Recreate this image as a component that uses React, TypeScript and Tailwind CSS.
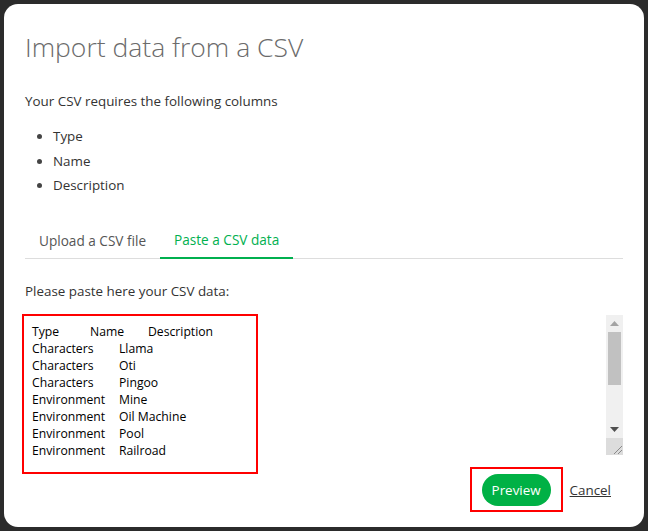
import { useState } from "react";

const csvText = [
  "Type\t\tName\tDescription",
  "Characters\tLlama",
  "Characters\tOti",
  "Characters\tPingoo",
  "Environment\tMine",
  "Environment\tOil Machine",
  "Environment\tPool",
  "Environment\tRailroad",
].join("\n");

const columns = ["Type", "Name", "Description"];

export default function App() {
  const [tab, setTab] = useState("paste");

  return (
    <div className="h-[531px] w-[648px] bg-[#2b2b2b] p-1 font-['Open_Sans',sans-serif]">
      <div className="relative flex h-[523px] w-[640px] flex-col rounded-[14px] bg-white px-[21px]">
        <h1 className="mt-[25px] text-[26.5px] font-light leading-[36px] text-[#6b6b6b]">
          Import data from a CSV
        </h1>

        <p className="mt-[26px] text-[13.4px] leading-[20px] text-[#333]">
          Your CSV requires the following columns
        </p>

        <ul className="mt-[15px] flex flex-col gap-[4.5px] pl-[28px] text-[13.4px] leading-[20px] text-[#333]">
          {columns.map((c) => (
            <li key={c} className="list-disc marker:text-[#444]">
              {c}
            </li>
          ))}
        </ul>

        <div className="mt-[34px] flex border-b border-[#dddddd]">
          <button
            onClick={() => setTab("upload")}
            className={`px-[14px] pb-[6px] text-[13.6px] leading-[22px] ${
              tab === "upload"
                ? "-mb-px border-b-2 border-[#00b04f] text-[#00b04f]"
                : "text-[#555]"
            }`}
          >
            Upload a CSV file
          </button>
          <button
            onClick={() => setTab("paste")}
            className={`px-[14px] pb-[6px] text-[13.6px] leading-[22px] ${
              tab === "paste"
                ? "-mb-px border-b-2 border-[#00b04f] text-[#00b04f]"
                : "text-[#555]"
            }`}
          >
            Paste a CSV data
          </button>
        </div>

        <p className="mt-[22px] text-[13.4px] leading-[20px] text-[#333]">
          Please paste here your CSV data:
        </p>

        <div className="mt-[14px] flex h-[140px]">
          <textarea
            readOnly
            value={csvText}
            className="h-full flex-1 resize-none overflow-hidden px-[7px] py-[8px] text-[12.2px] leading-[17px] text-black outline-none [tab-size:29px] font-['Open_Sans',sans-serif]"
          />
          <div className="flex w-[17px] flex-col bg-[#f0f0f0]">
            <div className="flex h-[17px] items-center justify-center">
              <svg width="9" height="5" viewBox="0 0 9 5">
                <path d="M4.5 0L9 5H0z" fill="#a3a3a3" />
              </svg>
            </div>
            <div className="mx-[2px] h-[53px] bg-[#c1c1c1]" />
            <div className="flex-1" />
            <div className="flex h-[17px] items-center justify-center">
              <svg width="9" height="5" viewBox="0 0 9 5">
                <path d="M0 0H9L4.5 5z" fill="#505050" />
              </svg>
            </div>
            <div className="flex h-[17px] items-end justify-end bg-[#dcdcdc]">
              <svg width="12" height="12" viewBox="0 0 12 12">
                <path d="M11 3L3 11M11 7L7 11" stroke="#8a8a8a" strokeWidth="1" />
              </svg>
            </div>
          </div>
        </div>

        <div className="mt-[19px] flex items-center justify-end gap-[19px] pr-[12px]">
          <button className="h-[32px] rounded-full bg-[#00b145] px-[10px] text-[13.4px] text-white">
            Preview
          </button>
          <a href="#" className="text-[13.4px] text-[#333] underline">
            Cancel
          </a>
        </div>

        <div className="pointer-events-none absolute left-[18px] top-[310px] h-[160px] w-[236px] border-2 border-[#ff0000]" />
        <div className="pointer-events-none absolute left-[466px] top-[463px] h-[45px] w-[93px] border-2 border-[#ff0000]" />
      </div>
    </div>
  );
}
